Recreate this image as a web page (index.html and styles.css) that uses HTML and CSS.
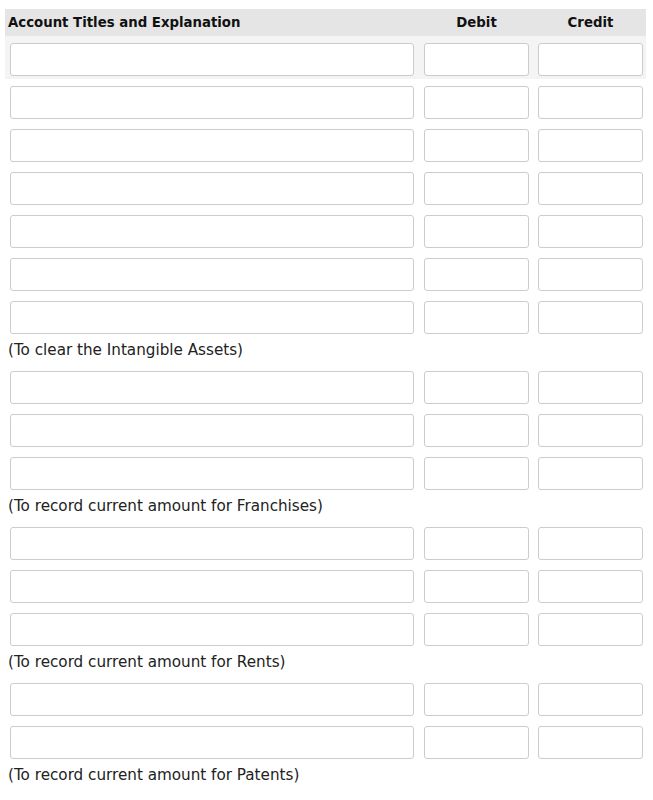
FILE: index.html
```html
<!DOCTYPE html>
<html>
<head>
<meta charset="utf-8">
<link rel="stylesheet" href="styles.css">
</head>
<body>
<div class="journal">
  <div class="head">
    <div class="h-acct">Account Titles and Explanation</div>
    <div class="h-debit">Debit</div>
    <div class="h-credit">Credit</div>
  </div>
  <div class="row first"><input class="acct"><input class="debit"><input class="credit"></div>
  <div class="row"><input class="acct"><input class="debit"><input class="credit"></div>
  <div class="row"><input class="acct"><input class="debit"><input class="credit"></div>
  <div class="row"><input class="acct"><input class="debit"><input class="credit"></div>
  <div class="row"><input class="acct"><input class="debit"><input class="credit"></div>
  <div class="row"><input class="acct"><input class="debit"><input class="credit"></div>
  <div class="row"><input class="acct"><input class="debit"><input class="credit"></div>
  <div class="note">(To clear the Intangible Assets)</div>
  <div class="row"><input class="acct"><input class="debit"><input class="credit"></div>
  <div class="row"><input class="acct"><input class="debit"><input class="credit"></div>
  <div class="row"><input class="acct"><input class="debit"><input class="credit"></div>
  <div class="note">(To record current amount for Franchises)</div>
  <div class="row"><input class="acct"><input class="debit"><input class="credit"></div>
  <div class="row"><input class="acct"><input class="debit"><input class="credit"></div>
  <div class="row"><input class="acct"><input class="debit"><input class="credit"></div>
  <div class="note">(To record current amount for Rents)</div>
  <div class="row"><input class="acct"><input class="debit"><input class="credit"></div>
  <div class="row"><input class="acct"><input class="debit"><input class="credit"></div>
  <div class="note">(To record current amount for Patents)</div>
</div>
</body>
</html>
```
FILE: styles.css
```css
html, body {
  margin: 0;
  padding: 0;
  background: #ffffff;
}
body {
  font-family: "DejaVu Sans", Verdana, sans-serif;
  color: #222;
}
.journal {
  width: 641px;
  margin: 9px 0 0 5px;
}
.head {
  display: flex;
  height: 27px;
  align-items: center;
  background: #e5e5e5;
  font-weight: bold;
  font-size: 13.3px;
  color: #111;
}
.h-acct {
  width: 414px;
  padding-left: 3px;
  box-sizing: border-box;
}
.h-debit {
  width: 114px;
  padding: 0 4px 0 5px;
  box-sizing: border-box;
  text-align: center;
}
.h-credit {
  width: 113px;
  padding: 0 3px 0 5px;
  box-sizing: border-box;
  text-align: center;
}
.row {
  display: flex;
  padding: 7px 3px 3px 5px;
}
.row.first {
  background: #f4f4f4;
}
.row input {
  box-sizing: border-box;
  height: 33px;
  border: 1px solid #cccccc;
  border-radius: 3px;
  background: #fff;
  margin: 0;
  padding: 0 6px;
  font: inherit;
}
.acct { width: 405px; }
.debit { width: 105px; margin-left: 10px !important; }
.credit { width: 105px; margin-left: 9px !important; }
.note {
  height: 27px;
  line-height: 27px;
  padding-left: 3px;
  font-size: 15.2px;
  color: #222;
}
```
